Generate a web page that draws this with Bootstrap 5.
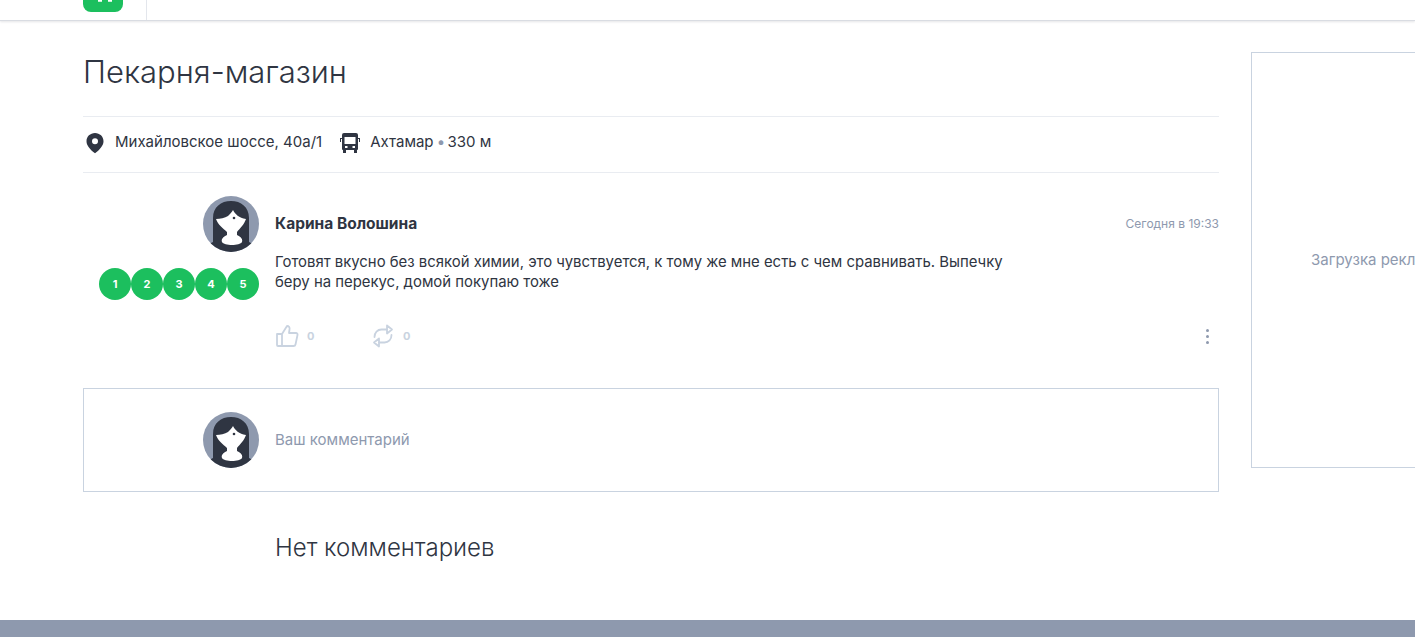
<!DOCTYPE html>
<html lang="ru">
<head>
	<meta charset="UTF-8">
	<meta name="viewport" content="width=device-width, initial-scale=1.0">
	<title>Пекарня-магазин</title>
	<link href="https://cdn.jsdelivr.net/npm/bootstrap@5.3.0/dist/css/bootstrap.min.css" rel="stylesheet">
	<style>
        html, body {
            height: 637px;
            overflow: hidden;
        }
        body {
            font-family: "Inter", "Noto Sans", sans-serif;
            color: #2f3542;
            background: #fff;
        }
        .top-bar {
            height: 21px;
            border-bottom: 1px solid #d9dce2;
            box-shadow: 0 1px 2px rgba(47, 53, 66, .12);
            padding-left: 83px;
        }
        .top-logo {
            width: 40px;
            height: 12px;
            display: block;
        }
        .top-sep {
            width: 1px;
            height: 20px;
            margin-left: 23px;
            background: #e3e6ec;
        }
        .page-wrap {
            width: 1500px;
            padding: 31px 0 0 83px;
            height: 599px;
            gap: 32px;
        }
        .main-col {
            width: 1136px;
            flex: none;
        }
        .ad-box {
            width: 300px;
            height: 416px;
            flex: none;
            border: 1px solid #c9d3e0;
            color: #8e99ae;
            font-size: 15px;
            padding-left: 59px;
        }
        .place-title {
            font-size: 31px;
            font-weight: 300;
            line-height: 40px;
            margin: 0;
            padding-bottom: 24px;
            border-bottom: 1px solid #e9ecf1;
        }
        .place-meta {
            height: 56px;
            padding-bottom: 4px;
            font-size: 15px;
            border-bottom: 1px solid #e9ecf1;
        }
        .meta-dot {
            color: #8e99ae;
            margin: 0 -2px 0 -1px;
        }
        .side-col {
            width: 176px;
            flex: none;
        }
        .user-pic {
            width: 56px;
            height: 56px;
            display: block;
        }
        .rate-row {
            margin-top: 16px;
        }
        .rate-dot {
            width: 32px;
            height: 32px;
            border-radius: 50%;
            background: #1cbf5e;
            color: #fff;
            font-size: 11px;
            font-weight: 700;
        }
        .review-block {
            padding-top: 23px;
            gap: 16px;
        }
        .review-body {
            flex: 1;
        }
        .review-head {
            height: 56px;
        }
        .review-name {
            font-size: 15.500px;
            font-weight: 700;
        }
        .review-date {
            font-size: 12px;
            color: #8e99ae;
        }
        .review-text {
            font-size: 14.900px;
            line-height: 20px;
            width: 740px;
            margin: 0;
        }
        .review-actions {
            height: 32px;
            margin-top: 28px;
            color: #c9d3e0;
            font-size: 11px;
            font-weight: 700;
        }
        .act-like {
            width: 96px;
            gap: 8px;
        }
        .act-repost {
            gap: 8px;
        }
        .act-more {
            width: 3px;
            gap: 3px;
            margin-right: 10px;
        }
        .act-more i {
            width: 3px;
            height: 3px;
            border-radius: 50%;
            background: #8e99ae;
            display: block;
        }
        .comment-box {
            height: 104px;
            margin-top: 36px;
            border: 1px solid #c9d3e0;
            padding: 23px 0 0 0;
            gap: 16px;
        }
        .comment-side {
            width: 175px;
            flex: none;
        }
        .comment-hint {
            height: 56px;
            font-size: 15px;
            color: #8e99ae;
        }
        .no-comments {
            font-size: 24px;
            font-weight: 300;
            line-height: 32px;
            margin: 40px 0 0 192px;
        }
        .bottom-bar {
            height: 17px;
            background: #8e99ae;
        }
	</style>
</head>
<body>
<svg width="0" height="0" class="d-block">
	<defs>
		<clipPath id="picClip"><circle cx="28" cy="28" r="28"/></clipPath>
		<symbol id="userPic" viewBox="0 0 56 56">
			<circle cx="28" cy="28" r="28" fill="#8e99ae"/>
			<g clip-path="url(#picClip)">
				<path fill="#2f3542" d="M10 46V22C10 11 18 5 28 5s18 6 18 17v24l8 4v6H2v-6z"/>
				<path fill="#fff" d="M13 23c4 0 9-1 12-3 2-2 4-4 5-6 2 4 6 8 13 9-2 6-6 9-9 13v3c4 2 6 4 5 7-2 4-18 4-20 0-1-3 1-5 5-7v-3c-4-4-9-7-11-13z"/>
				<circle cx="31" cy="22" r="1.300" fill="#2f3542"/>
			</g>
		</symbol>
	</defs>
</svg>

<div class="top-bar d-flex align-items-start">
	<svg class="top-logo" viewBox="0 0 40 12">
		<path fill="#1cbf5e" d="M0 0h40v4a8 8 0 0 1-8 8H8a8 8 0 0 1-8-8z"/>
		<path fill="#fff" d="M15 0h4v1.800h-4zM25 0h4v1.800h-4z"/>
	</svg>
	<div class="top-sep"></div>
</div>

<div class="page-wrap d-flex align-items-start">
	<div class="main-col">
		<h1 class="place-title">Пекарня-магазин</h1>
		<div class="place-meta d-flex align-items-center">
			<svg width="24" height="24" viewBox="0 0 24 24" class="me-2"><path fill="#2f3542" fill-rule="evenodd" d="M12 2c-4.800 0-8.500 3.600-8.500 8.200 0 3.800 2.800 7.800 8.500 12 5.700-4.200 8.500-8.200 8.500-12C20.500 5.600 16.800 2 12 2zm0 5.300a3 3 0 1 1 0 6 3 3 0 0 1 0-6z"/></svg>
			<span>Михайловское шоссе, 40а/1</span>
			<svg width="24" height="24" viewBox="0 0 24 24" class="ms-3 me-2"><path fill="#2f3542" fill-rule="evenodd" d="M6 2h12a2 2 0 0 1 2 2v3h2v4h-1V8h-1v10a1 1 0 0 1-1 1v3h-3v-3H8v3H5v-3a1 1 0 0 1-1-1V8H3v3H2V7h2V4a2 2 0 0 1 2-2zM6.500 6v7h11V6zM7 15v2h2.500v-2zm7.500 0v2H17v-2z"/></svg>
			<span>Ахтамар <span class="meta-dot">•</span> 330 м</span>
		</div>

		<div class="review-block d-flex">
			<div class="side-col d-flex flex-column align-items-end">
				<svg class="user-pic"><use href="#userPic"/></svg>
				<div class="rate-row d-flex">
					<div class="rate-dot d-flex align-items-center justify-content-center">1</div>
					<div class="rate-dot d-flex align-items-center justify-content-center">2</div>
					<div class="rate-dot d-flex align-items-center justify-content-center">3</div>
					<div class="rate-dot d-flex align-items-center justify-content-center">4</div>
					<div class="rate-dot d-flex align-items-center justify-content-center">5</div>
				</div>
			</div>
			<div class="review-body">
				<div class="review-head d-flex align-items-center justify-content-between">
					<span class="review-name">Карина Волошина</span>
					<span class="review-date">Сегодня в 19:33</span>
				</div>
				<p class="review-text">Готовят вкусно без всякой химии, это чувствуется, к тому же мне есть с чем сравнивать. Выпечку беру на перекус, домой покупаю тоже</p>
				<div class="review-actions d-flex align-items-center">
					<div class="act-like d-flex align-items-center">
						<svg width="24" height="24" viewBox="0 0 24 24" fill="none" stroke="#c9d3e0" stroke-width="1.800" stroke-linejoin="round"><path d="M2 10h5v12H3a1 1 0 0 1-1-1zM7 10l5-8c2 0 3 1.500 2.500 3.500L14 9h7c1 0 1.800 1 1.500 2l-2 9.500c-.2 1-1 1.500-2 1.500H7"/></svg>
						<span>0</span>
					</div>
					<div class="act-repost d-flex align-items-center">
						<svg width="24" height="24" viewBox="0 0 24 24" fill="none" stroke="#c9d3e0" stroke-width="1.800" stroke-linejoin="round" stroke-linecap="round"><path d="M3.500 13c0-4.500 3-7.500 7-7.500H16M20.500 11c0 4.500-3 7.500-7 7.500H8"/><path d="M16 1.500l5 4-5 4zM8 14.500l-5 4 5 4z"/></svg>
						<span>0</span>
					</div>
					<div class="act-more d-flex flex-column ms-auto"><i></i><i></i><i></i></div>
				</div>
			</div>
		</div>

		<div class="comment-box d-flex">
			<div class="comment-side d-flex justify-content-end">
				<svg class="user-pic"><use href="#userPic"/></svg>
			</div>
			<div class="comment-hint d-flex align-items-center">Ваш комментарий</div>
		</div>

		<div class="no-comments">Нет комментариев</div>
	</div>
	<div class="ad-box d-flex align-items-center">Загрузка рекламы</div>
</div>

<div class="bottom-bar"></div>
</body>
</html>
